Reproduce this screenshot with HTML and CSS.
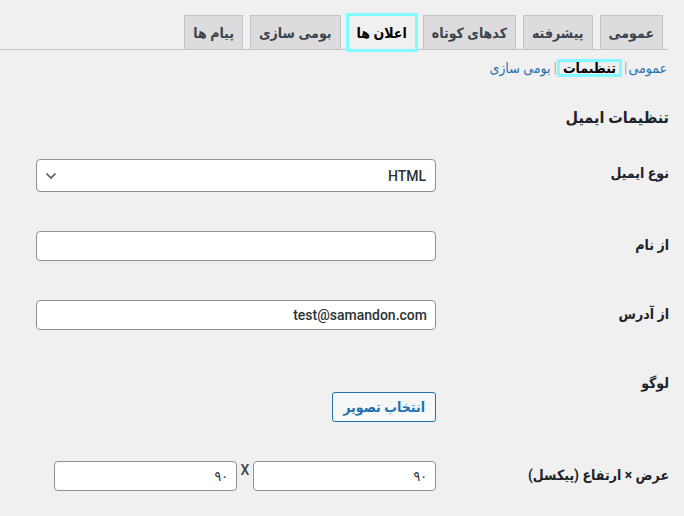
FILE: index.html
```html
<!DOCTYPE html>
<html dir="rtl" lang="fa">
<head>
    <meta charset="utf-8">
    <title>تنظیمات ایمیل</title>
    <link rel="stylesheet" href="styles.css">
</head>
<body>
    <div class="wrap">
        <nav class="nav-tab-wrapper">
            <a class="nav-tab" href="#">عمومی</a>
            <a class="nav-tab" href="#">پیشرفته</a>
            <a class="nav-tab" href="#">کدهای کوتاه</a>
            <a class="nav-tab nav-tab-active" href="#">اعلان ها</a>
            <a class="nav-tab" href="#">بومی سازی</a>
            <a class="nav-tab" href="#">پیام ها</a>
        </nav>

        <ul class="subsubsub">
            <li><a href="#">عمومی</a><span class="sep">|</span></li>
            <li><a class="current" href="#">تنظیمات</a><span class="sep">|</span></li>
            <li><a href="#">بومی سازی</a></li>
        </ul>

        <h2 class="title">تنظیمات ایمیل</h2>

        <div class="form-table">
            <div class="form-row">
                <div class="form-label">نوع ایمیل</div>
                <div class="form-field">
                    <div class="select">
                        <span class="select-value">HTML</span>
                        <svg class="select-arrow" width="12" height="8" viewBox="0 0 12 8">
                            <path d="M1.5 1.5 L6 6 L10.5 1.5" fill="none" stroke="#50575e" stroke-width="1.6"/>
                        </svg>
                    </div>
                </div>
            </div>

            <div class="form-row">
                <div class="form-label">از نام</div>
                <div class="form-field">
                    <input type="text" class="input regular-text" value="">
                </div>
            </div>

            <div class="form-row">
                <div class="form-label">از آدرس</div>
                <div class="form-field">
                    <input type="text" class="input regular-text" value="test@samandon.com">
                </div>
            </div>

            <div class="form-row row-logo">
                <div class="form-label">لوگو</div>
                <div class="form-field">
                    <div class="logo-preview"></div>
                    <button class="button">انتخاب تصویر</button>
                </div>
            </div>

            <div class="form-row">
                <div class="form-label">عرض × ارتفاع (پیکسل)</div>
                <div class="form-field size-field">
                    <input type="text" class="input small" value="۹۰">
                    <span class="times">X</span>
                    <input type="text" class="input small" value="۹۰">
                </div>
            </div>
        </div>
    </div>
</body>
</html>
```

FILE: styles.css
```css
body {
    margin: 0;
    background: #f0f0f1;
    color: #1d2327;
    font-family: Roboto, "DejaVu Sans Condensed", "DejaVu Sans", sans-serif;
    font-size: 13px;
}
.wrap {
    margin-right: 15px;
}
.nav-tab-wrapper {
    display: flex;
    padding: 15px 6px 0 0;
    border-bottom: 1px solid #c3c4c7;
    height: 34px;
}
.nav-tab {
    display: block;
    height: 24px;
    margin-left: 7px;
    padding: 5px 8px 4px;
    border: 1px solid #c3c4c7;
    background: #dcdcde;
    color: #3c434a;
    font-size: 14px;
    font-weight: bold;
    line-height: 24px;
    text-decoration: none;
    white-space: nowrap;
}
.nav-tab-active {
    background: #f0f0f1;
    border-bottom-color: #f0f0f1;
    color: #000;
    outline: 3px solid #80fbff;
    outline-offset: -1px;
}
.subsubsub {
    display: flex;
    list-style: none;
    margin: 5px 0 0;
    padding: 0 2px 0 0;
    line-height: 26px;
    font-size: 14px;
}
.subsubsub a {
    color: #2271b1;
    text-decoration: none;
}
.subsubsub a.current {
    color: #000;
    font-weight: bold;
    padding: 0 5px;
    outline: 3px solid #80fbff;
    outline-offset: -2px;
}
.sep {
    color: #a7aaad;
    margin: 0 1px 0 3px;
}
.title {
    margin: 26px 0 0;
    font-size: 16px;
    line-height: 22px;
    font-weight: bold;
}
.form-table {
    padding-top: 30px;
}
.form-row {
    display: flex;
    align-items: flex-start;
    margin-bottom: 39px;
}
.form-label {
    width: 223px;
    padding-top: 4px;
    font-size: 14px;
    font-weight: bold;
    line-height: 20px;
}
.form-field {
    display: flex;
    flex-direction: column;
    align-items: flex-start;
    padding-right: 10px;
}
.input {
    box-sizing: border-box;
    height: 30px;
    padding: 0 8px;
    border: 1px solid #8c8f94;
    border-radius: 4px;
    background: #fff;
    color: #2c3338;
    font-family: Roboto, "DejaVu Sans Condensed", "DejaVu Sans", sans-serif;
    font-size: 14px;
    font-weight: 500;
    text-align: right;
    direction: rtl;
}
.regular-text {
    width: 400px;
}
.select {
    box-sizing: border-box;
    display: flex;
    justify-content: space-between;
    align-items: center;
    width: 400px;
    height: 33px;
    padding: 0 9px 0 8px;
    border: 1px solid #8c8f94;
    border-radius: 4px;
    background: #fff;
}
.select-value {
    color: #2c3338;
    font-size: 14px;
    font-weight: 500;
}
.row-logo {
    margin-top: 3px;
}
.logo-preview {
    height: 23px;
}
.button {
    height: 30px;
    padding: 0 10px;
    border: 1px solid #2271b1;
    border-radius: 3px;
    background: #f6f7f7;
    color: #2271b1;
    font-family: Roboto, "DejaVu Sans Condensed", "DejaVu Sans", sans-serif;
    font-size: 14px;
    font-weight: bold;
    cursor: pointer;
}
.size-field {
    flex-direction: row;
}
.input.small {
    width: 183px;
}
.times {
    width: 16px;
    text-align: center;
    font-size: 14px;
    font-weight: 500;
    line-height: 18px;
    color: #3c434a;
}
```
